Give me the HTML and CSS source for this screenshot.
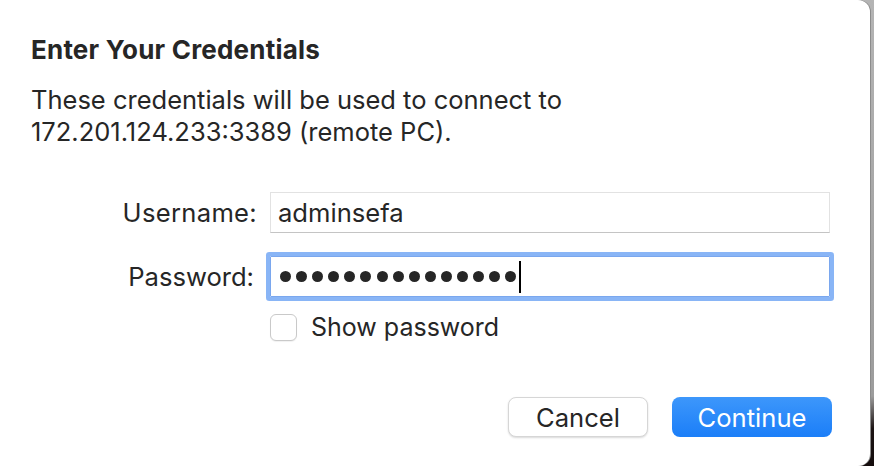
FILE: index.html
```html
<!DOCTYPE html>
<html>
<head>
<meta charset="utf-8">
<link rel="stylesheet" href="styles.css">
</head>
<body>
<div class="dialog">
  <h1 class="title">Enter Your Credentials</h1>
  <p class="message">These credentials will be used to connect to<br>172.201.124.233:3389 (remote PC).</p>
  <div class="form">
    <label class="label user">Username:</label>
    <div class="field">adminsefa</div>
    <label class="label pass">Password:</label>
    <div class="field focused">
      <span class="dots"><i></i><i></i><i></i><i></i><i></i><i></i><i></i><i></i><i></i><i></i><i></i><i></i><i></i><i></i><i></i></span><span class="caret"></span>
    </div>
    <span></span>
    <div class="check-row"><span class="checkbox"></span><span class="check-label">Show password</span></div>
  </div>
  <div class="buttons">
    <button class="btn cancel">Cancel</button>
    <button class="btn primary">Continue</button>
  </div>
</div>
</body>
</html>
```
FILE: styles.css
```css
html, body {
  margin: 0;
  padding: 0;
  width: 874px;
  height: 466px;
  overflow: hidden;
}
body {
  background: linear-gradient(to bottom, #b4b4b4 0%, #9c9c9c 85%, #1c1414 92%, #140c0c 100%);
  font-family: "Inter", "Liberation Sans", sans-serif;
  color: #262626;
}
.dialog {
  width: 870px;
  height: 466px;
  box-sizing: border-box;
  background: #ffffff;
  border-radius: 0 12px 12px 0;
  box-shadow: 1px 0 0 #8c8c8c;
  padding: 34px 38px 0 31px;
  display: flex;
  flex-direction: column;
}
.title {
  margin: 0;
  font-size: 26px;
  font-weight: 700;
  line-height: 32px;
  letter-spacing: 0.2px;
}
.message {
  margin: 18px 0 0;
  font-size: 25.5px;
  line-height: 32px;
}
.form {
  margin-top: 44px;
  display: grid;
  grid-template-columns: 226px 560px;
  column-gap: 13px;
  row-gap: 23px;
  align-items: center;
}
.label {
  text-align: right;
  font-size: 25.6px;
}
.label.user {
  letter-spacing: 0.3px;
}
.label.pass {
  padding-right: 3px;
}
.field {
  height: 41px;
  box-sizing: border-box;
  border: 1px solid #e2e2e2;
  border-bottom-color: #c4c4c4;
  padding-left: 7px;
  display: flex;
  align-items: center;
  font-size: 25.6px;
}
.field.focused {
  border: 1px solid #7aa7ee;
  box-shadow: 0 0 0 4px #89b5f6;
  border-radius: 1px;
  padding-left: 9px;
}
.dots {
  display: flex;
  gap: 5.1px;
}
.dots i {
  width: 11px;
  height: 11px;
  border-radius: 50%;
  background: #262626;
}
.caret {
  width: 2px;
  height: 32px;
  background: #000;
  margin-left: 3px;
}
.check-row {
  margin-top: -8px;
  display: flex;
  align-items: center;
  gap: 14px;
}
.checkbox {
  width: 27px;
  height: 27px;
  box-sizing: border-box;
  border: 1px solid #c9c9c9;
  border-radius: 6px;
  background: #fff;
  box-shadow: 0 1px 1px rgba(0,0,0,0.06);
}
.check-label {
  font-size: 25px;
}
.buttons {
  margin-top: auto;
  margin-bottom: 29px;
  display: flex;
  justify-content: flex-end;
  gap: 24px;
}
.btn {
  height: 40px;
  border-radius: 8px;
  font-family: inherit;
  font-size: 25.6px;
  padding: 0;
}
.cancel {
  width: 140px;
  background: #fff;
  color: #262626;
  border: 1px solid #d6d6d6;
  box-shadow: 0 1px 2px rgba(0,0,0,0.15);
}
.primary {
  width: 160px;
  color: #fff;
  border: none;
  background: linear-gradient(to bottom, #3d97fb, #1b7ef8);
}
```
